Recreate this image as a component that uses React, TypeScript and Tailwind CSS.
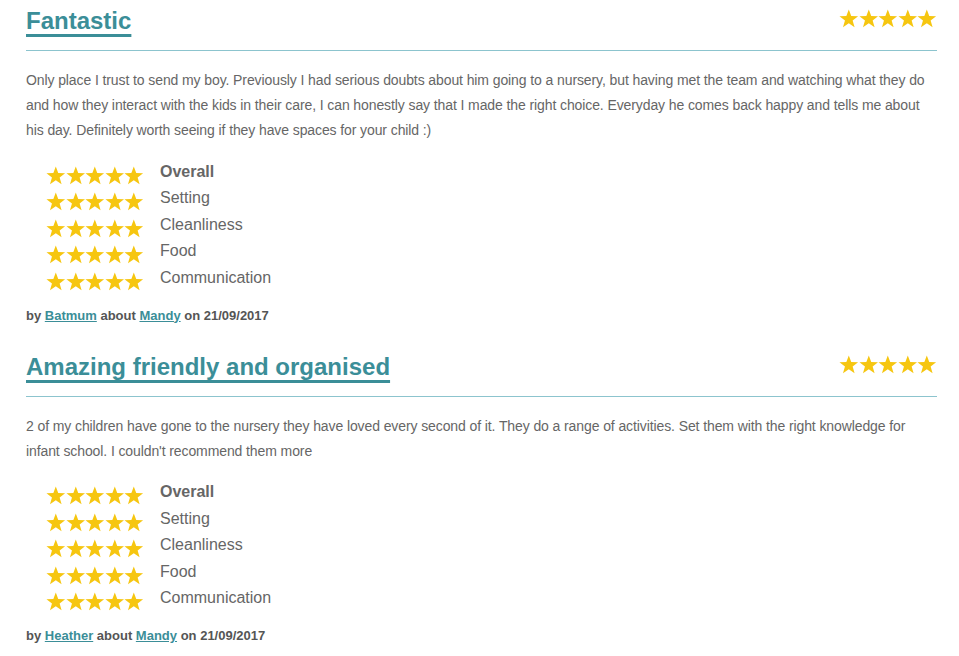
const reviews = [
  {
    title: "Fantastic",
    body: "Only place I trust to send my boy. Previously I had serious doubts about him going to a nursery, but having met the team and watching what they do and how they interact with the kids in their care, I can honestly say that I made the right choice. Everyday he comes back happy and tells me about his day. Definitely worth seeing if they have spaces for your child :)",
    author: "Batmum",
    about: "Mandy",
    date: "21/09/2017",
  },
  {
    title: "Amazing friendly and organised",
    body: "2 of my children have gone to the nursery they have loved every second of it. They do a range of activities. Set them with the right knowledge for infant school. I couldn't recommend them more",
    author: "Heather",
    about: "Mandy",
    date: "21/09/2017",
  },
];

const categories = ["Overall", "Setting", "Cleanliness", "Food", "Communication"];

function Star() {
  return (
    <svg viewBox="0 0 24 23" className="h-[19px] w-[19.6px] shrink-0">
      <polygon
        points="12,0.6 15,8.5 23.4,8.7 16.7,13.9 19.1,22.1 12,17.3 4.9,22.1 7.3,13.9 0.6,8.7 9,8.5"
        fill="#f6c610"
      />
    </svg>
  );
}

function Stars({ className = "" }: { className?: string }) {
  return (
    <div className={`flex ${className}`}>
      {[0, 1, 2, 3, 4].map((i) => (
        <Star key={i} />
      ))}
    </div>
  );
}

function Review({ review }: { review: (typeof reviews)[number] }) {
  return (
    <article className="mb-[20px]">
      <div className="flex items-center justify-between border-b border-[#8cc4ce] pb-[15px] pt-[7px]">
        <h2 className="text-[24px] font-bold leading-[28px] text-[#3b8e98] underline decoration-[3px] underline-offset-[5px] [text-decoration-skip-ink:none]">
          {review.title}
        </h2>
        <Stars className="-mt-[5px]" />
      </div>

      <p className="mt-[17px] text-[14px] leading-[25px] tracking-[-0.1px] text-[#666]">
        {review.body}
      </p>

      <div className="mt-[19px] pl-5">
        {categories.map((c) => (
          <div key={c} className="flex h-[26.5px] items-center gap-4">
            <Stars />
            <span
              className={`-mt-[7px] text-[16px] leading-5 text-[#666] ${
                c === "Overall" ? "font-bold" : ""
              }`}
            >
              {c}
            </span>
          </div>
        ))}
      </div>

      <p className="mt-[11px] text-[13px] font-bold leading-5 text-[#555]">
        by{" "}
        <a href="#" className="text-[#3b8e98] underline">
          {review.author}
        </a>{" "}
        about{" "}
        <a href="#" className="text-[#3b8e98] underline">
          {review.about}
        </a>{" "}
        on {review.date}
      </p>
    </article>
  );
}

export default function App() {
  return (
    <main className="min-h-screen bg-white pl-[26px] pr-[22px] font-['Liberation_Sans',Arial,sans-serif]">
      {reviews.map((r) => (
        <Review key={r.title} review={r} />
      ))}
    </main>
  );
}
